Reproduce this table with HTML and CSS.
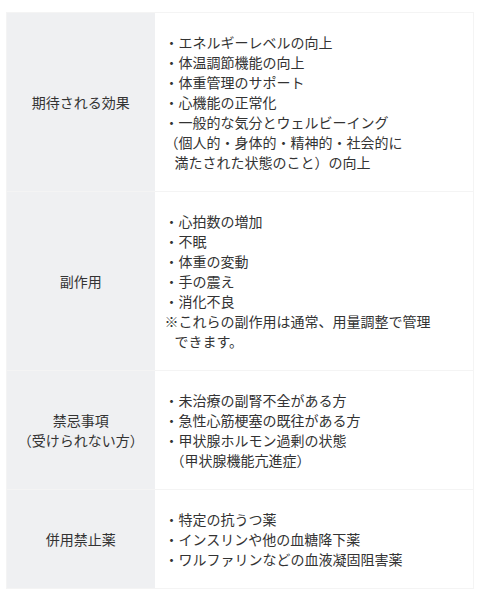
FILE: index.html
```html
<!DOCTYPE html>
<html lang="ja">
<head>
<meta charset="utf-8">
<link rel="stylesheet" href="styles.css">
</head>
<body>
<table class="info">
  <tr>
    <th>期待される効果</th>
    <td>
      <div>・エネルギーレベルの向上</div>
      <div>・体温調節機能の向上</div>
      <div>・体重管理のサポート</div>
      <div>・心機能の正常化</div>
      <div>・一般的な気分とウェルビーイング</div>
      <div>（個人的・身体的・精神的・社会的に</div>
      <div class="ind">満たされた状態のこと）の向上</div>
    </td>
  </tr>
  <tr>
    <th>副作用</th>
    <td>
      <div>・心拍数の増加</div>
      <div>・不眠</div>
      <div>・体重の変動</div>
      <div>・手の震え</div>
      <div>・消化不良</div>
      <div>※これらの副作用は通常、用量調整で管理</div>
      <div class="ind">できます。</div>
    </td>
  </tr>
  <tr>
    <th>禁忌事項<br>（受けられない方）</th>
    <td>
      <div>・未治療の副腎不全がある方</div>
      <div>・急性心筋梗塞の既往がある方</div>
      <div>・甲状腺ホルモン過剰の状態</div>
      <div class="ind2">（甲状腺機能亢進症）</div>
    </td>
  </tr>
  <tr>
    <th>併用禁止薬</th>
    <td>
      <div>・特定の抗うつ薬</div>
      <div>・インスリンや他の血糖降下薬</div>
      <div>・ワルファリンなどの血液凝固阻害薬</div>
    </td>
  </tr>
</table>
</body>
</html>
```

FILE: styles.css
```css
html, body {
  margin: 0;
  padding: 0;
  background: #ffffff;
}
body {
  padding: 12px 6px;
  font-family: "Noto Sans CJK JP", "Noto Sans", sans-serif;
  font-size: 14px;
  line-height: 20px;
  color: #333333;
}
.info {
  width: 468px;
  border-collapse: collapse;
  border: 1px solid #f4f4f4;
}
.info th {
  width: 148px;
  box-sizing: border-box;
  background: #eff0f2;
  font-weight: normal;
  text-align: center;
  vertical-align: middle;
  padding: 19px 4px;
  border-top: 1px solid #f4f4f4;
}
.info td {
  background: #ffffff;
  text-align: left;
  vertical-align: middle;
  padding: 19px 10px;
  border-top: 1px solid #f4f4f4;
  white-space: nowrap;
}
.ind {
  padding-left: 10px;
}
.ind2 {
  padding-left: 6px;
}
```
